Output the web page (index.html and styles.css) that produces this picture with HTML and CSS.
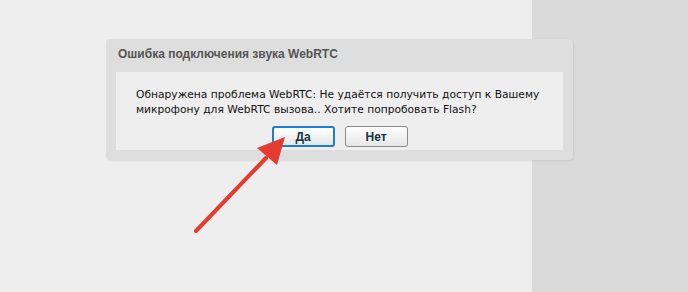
FILE: index.html
```html
<!DOCTYPE html>
<html lang="ru">
<head>
    <meta charset="UTF-8">
    <title>WebRTC</title>
    <link rel="stylesheet" href="styles.css">
</head>
<body>
    <div class="page">
        <div class="dialog">
            <div class="dialog-title">Ошибка подключения звука WebRTC</div>
            <div class="dialog-body">
                <p class="message">Обнаружена проблема WebRTC: Не удаётся получить доступ к Вашему микрофону для WebRTC вызова.. Хотите попробовать Flash?</p>
                <div class="actions">
                    <button class="btn btn-primary">Да</button>
                    <button class="btn">Нет</button>
                </div>
            </div>
        </div>

        <!-- pointer arrow over the page -->
        <svg class="arrow" width="688" height="292" viewBox="0 0 688 292">
            <line x1="196" y1="231" x2="266" y2="158" stroke="#e53b30" stroke-width="4" stroke-linecap="round"/>
            <polygon points="285,137 257,148 277,165" fill="#e53b30"/>
        </svg>
    </div>
</body>
</html>
```

FILE: styles.css
```css
body {
    margin: 0;
    font-family: 'DejaVu Sans', sans-serif;
}

.page {
    position: relative;
    height: 292px;
    overflow: hidden;
    background: linear-gradient(to right, #eeeeee 532px, #d9dad9 532px);
    padding-top: 39px;
    box-sizing: border-box;
}

.dialog {
    width: 467px;
    height: 121px;
    margin-left: 106px;
    background: #dedede;
    border-radius: 4px;
    box-shadow: 1px 1px 2px rgba(0, 0, 0, 0.08);
    display: flex;
    flex-direction: column;
}

.dialog-title {
    height: 33px;
    padding-left: 12px;
    box-sizing: border-box;
    padding-top: 8px;
    font-family: 'Liberation Sans', sans-serif;
    font-weight: bold;
    font-size: 12px;
    color: #555;
}

.dialog-body {
    margin: 0 10px 10px;
    flex: 1;
    background: #eeeeee;
    padding: 15px 0 0 20px;
    box-sizing: border-box;
}

.message {
    margin: 0;
    font-size: 10.7px;
    line-height: 15px;
    color: #111;
    width: 420px;
}

.actions {
    display: flex;
    justify-content: center;
    gap: 10px;
    margin-top: 9px;
    padding-right: 20px;
}

.btn {
    width: 63px;
    height: 21px;
    padding: 0;
    border: 1px solid #8a8a8a;
    border-radius: 3px;
    background: linear-gradient(#ffffff, #e6e6e6);
    font-family: 'Liberation Sans', sans-serif;
    font-weight: bold;
    font-size: 12px;
    color: #123544;
}

.btn-primary {
    border: 2px solid #1a7fd4;
}

.arrow {
    position: absolute;
    left: 0;
    top: 0;
}
```
